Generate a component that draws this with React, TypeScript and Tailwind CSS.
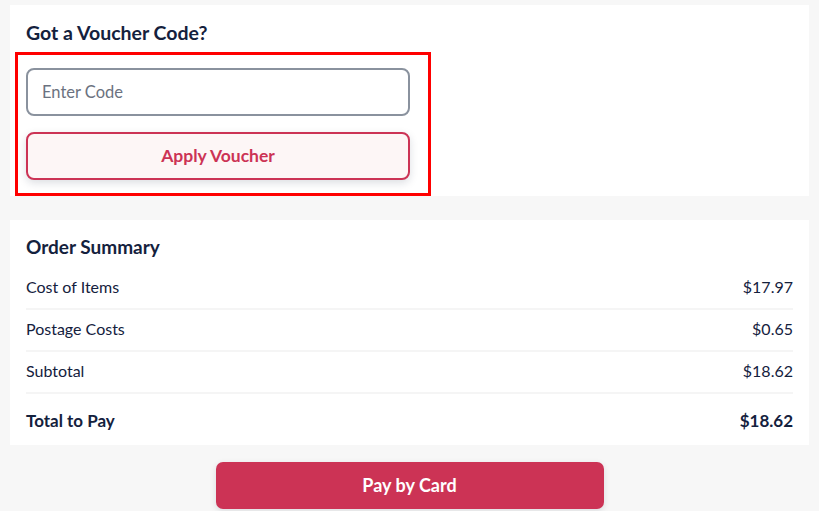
export default function App() {
  const rows = [
    { label: 'Cost of Items', value: '$17.97' },
    { label: 'Postage Costs', value: '$0.65' },
    { label: 'Subtotal', value: '$18.62' },
  ]

  return (
    <div
      className="min-h-[511px] bg-[#f7f7f7] pt-[5px] text-[#14213d]"
      style={{ fontFamily: 'Lato, "Noto Sans", sans-serif' }}
    >
      {/* Voucher card */}
      <div className="mx-[10px] bg-white pt-[15px]">
        <h2 className="px-[16px] text-[19.5px] font-bold leading-[26px]">Got a Voucher Code?</h2>
        <div className="ml-[5px] mt-[6px] w-[416px] border-[3px] border-[#ff0000] px-[8px] pb-[13px] pt-[13px]">
          <input
            placeholder="Enter Code"
            className="h-[48px] w-[384px] rounded-[8px] border-2 border-[#8a929e] px-[14px] text-[16.5px] outline-none placeholder:text-[#6b7280]"
          />
          <button className="mt-[16px] flex h-[48px] w-[384px] items-center justify-center rounded-[8px] border-2 border-[#cc3355] bg-[#fdf6f6] text-[17.5px] font-bold text-[#cc3355] shadow-[0_3px_8px_rgba(20,33,61,0.15)]">
            Apply Voucher
          </button>
        </div>
      </div>

      {/* Order summary */}
      <div className="mx-[10px] mt-[24px] bg-white px-[16px] pt-[14px]">
        <h2 className="pb-[8px] text-[19px] font-bold leading-[26px]">Order Summary</h2>
        {rows.map((r) => (
          <div
            key={r.label}
            className="flex h-[42px] items-center justify-between border-b-2 border-[#f5f5f5] pb-[2px] text-[16px]"
          >
            <span>{r.label}</span>
            <span>{r.value}</span>
          </div>
        ))}
        <div className="flex items-center justify-between pb-[15px] pt-[18px] text-[17px] font-bold leading-[18px]">
          <span>Total to Pay</span>
          <span>$18.62</span>
        </div>
      </div>

      <div className="mt-[17px] flex justify-center">
        <button className="flex h-[47px] w-[388px] items-center justify-center rounded-[7px] bg-[#cc3355] text-[18px] font-bold text-white shadow-[0_2px_6px_rgba(20,33,61,0.12)]">
          Pay by Card
        </button>
      </div>
    </div>
  )
}
